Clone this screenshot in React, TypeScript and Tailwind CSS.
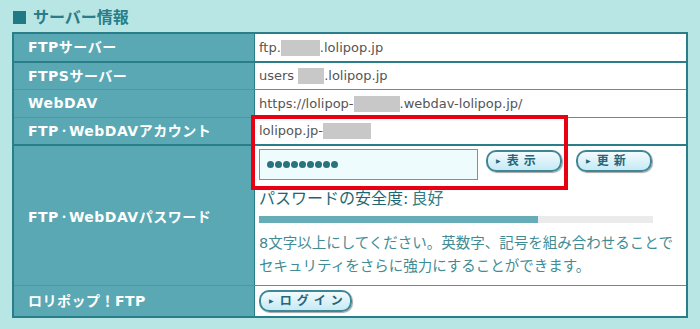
import React from 'react';

const font = { fontFamily: '"DejaVu Sans", "Noto Sans CJK JP", sans-serif' };

const Redact: React.FC<{ w: string }> = ({ w }) => (
  <span className={`inline-block h-[16px] bg-[#c8c8c8] align-middle ${w}`} />
);

const Dot = () => <span className="text-[10px] tracking-normal">・</span>;

const PillButton: React.FC<{ label: string; w: string }> = ({ label, w }) => (
  <button
    className={`flex h-[22px] items-center gap-[6px] rounded-[10px] border-2 border-[#3f8796] bg-gradient-to-b from-[#f2fbfe] to-[#c6eaf4] pl-[8px] text-[12px] font-bold text-[#24667a] shadow-[1px_1px_1px_rgba(0,0,0,0.35)] ${w}`}
  >
    <span className="text-[6px] leading-none text-[#24667a]">▶</span>
    <span className="tracking-[5px]">{label}</span>
  </button>
);

const Row: React.FC<{ label: React.ReactNode; h: string; line?: string; children: React.ReactNode }> = ({
  label,
  h,
  line = 'border-t-2 border-[#2a7e8a]',
  children,
}) => (
  <div className={`flex ${h} ${line}`}>
    <div className="flex w-[241px] shrink-0 items-center border-r border-[#2a7e8a] bg-[#5aa8b4] pl-[14px] text-[14px] font-bold tracking-[0.5px] text-white">
      {label}
    </div>
    <div className="flex flex-1 items-center bg-white pl-[4px] text-[13px] text-[#555]">{children}</div>
  </div>
);

const App: React.FC = () => {
  return (
    <div className="relative h-[329px] w-[700px] overflow-hidden bg-[#b8e6e4] pl-[12px] pr-[12px] pt-[7px]" style={font}>
      {/* Section title */}
      <h2 className="flex h-[21px] items-center gap-[7px] pl-[1px] text-[16px] font-bold text-[#2a7d88]">
        <span className="inline-block h-[13px] w-[13px] bg-[#1f7a86]" />
        <span>サーバー情報</span>
      </h2>

      {/* Info table */}
      <div className="mt-[4px] border-2 border-[#2a7e8a]">
        <Row label="FTPサーバー" h="h-[27px]" line="">
          ftp.<Redact w="w-[39px]" />.lolipop.jp
        </Row>
        <Row label="FTPSサーバー" h="h-[28px]">
          users<Redact w="w-[26px] ml-[4px]" />.lolipop.jp
        </Row>
        <Row label="WebDAV" h="h-[28px]" line="border-t border-[#4f98a3]">
          https://lolipop-<Redact w="w-[46px]" />.webdav-lolipop.jp/
        </Row>
        <Row label={<>FTP<Dot />WebDAVアカウント</>} h="h-[27px]" line="border-t border-[#4f98a3]">
          lolipop.jp-<Redact w="w-[48px]" />
        </Row>

        {/* Password row */}
        <div className="flex h-[141px] border-t-2 border-[#2a7e8a]">
          <div className="flex w-[241px] shrink-0 items-center border-r border-[#2a7e8a] bg-[#5aa8b4] pl-[14px] pt-[4px] text-[14px] font-bold tracking-[0.5px] text-white">
            FTP<Dot />WebDAVパスワード
          </div>
          <div className="flex flex-1 flex-col bg-white pl-[4px] pt-[3px]">
            <div className="flex items-center">
              <div className="flex h-[31px] w-[219px] items-center gap-[1px] border border-[#5f9ea8] bg-[#effcfd] pl-[7px]">
                {Array.from({ length: 9 }).map((_, i) => (
                  <span key={i} className="h-[7px] w-[7px] rounded-full bg-[#2a7280]" />
                ))}
              </div>
              <div className="ml-[8px] mt-[-7px]">
                <PillButton label="表示" w="w-[76px]" />
              </div>
              <div className="ml-[14px] mt-[-7px]">
                <PillButton label="更新" w="w-[76px]" />
              </div>
            </div>
            <div className="mt-[9px] flex h-[20px] items-center text-[16px] text-[#2e7b85]">
              <span className="text-[#1d6670]">パスワードの安全度:</span>
              <span className="ml-[3px]">良好</span>
            </div>
            <div className="mt-[7px] flex h-[7px] w-[394px] bg-[#ebebeb]">
              <div className="h-full w-[279px] bg-[#67adb8]" />
            </div>
            <p className="mt-[9px] text-[14.5px] leading-[23px] text-[#3f8c94]">
              8文字以上にしてください。英数字、記号を組み合わせることで
              <br />
              セキュリティをさらに強力にすることができます。
            </p>
          </div>
        </div>

        <Row label="ロリポップ！FTP" h="h-[31px]" line="border-t border-[#4f98a3]">
          <PillButton label="ログイン" w="w-[93px]" />
        </Row>
      </div>

      {/* Red highlight annotation */}
      <div className="absolute left-[251px] top-[115px] h-[75px] w-[317px] border-4 border-[#e60012]" />
    </div>
  );
};

export default App;
